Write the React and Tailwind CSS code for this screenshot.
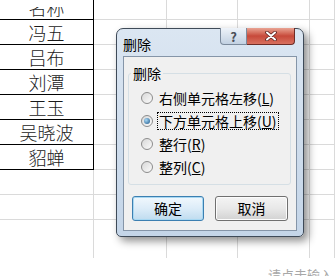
import React from 'react'

const NAMES = ['冯五', '吕布', '刘潭', '王玉', '吴晓波', '貂蝉']
const COLS = [94, 73, 71, 72, 25]

const OPTIONS = [
  { label: '右侧单元格左移', key: 'L' },
  { label: '下方单元格上移', key: 'U', checked: true },
  { label: '整行', key: 'R' },
  { label: '整列', key: 'C' },
]

function clsx(...a) {
  return a.filter(Boolean).join(' ')
}

function Row({ name, dark, height = 'h-[25px]', last, clipped }) {
  return (
    <div className={`flex ${height}`}>
      {COLS.map((w, i) => {
        const isName = i === 0
        const black = isName && dark
        return (
          <div
            key={i}
            style={{ width: w }}
            className={clsx(
              'flex shrink-0 border-r',
              clipped ? 'flex-col justify-end' : 'items-center justify-center',
              !last && 'border-b',
              black ? 'border-black' : 'border-[#dadada]',
            )}
          >
            {isName && name && !clipped && (
              <span className="text-[18px] font-light leading-none text-[#1a1a1a]">{name}</span>
            )}
            {isName && name && clipped && (
              <div className="flex h-[12px] w-full justify-center overflow-hidden">
                <span className="-mt-[9px] text-[18px] font-light leading-[18px] text-[#1a1a1a]">{name}</span>
              </div>
            )}
          </div>
        )
      })}
    </div>
  )
}

function Radio({ checked }) {
  return (
    <span className="flex h-[12px] w-[12px] shrink-0 items-center justify-center rounded-full border border-[#8c8c8c] bg-gradient-to-br from-[#d8d8d8] to-[#fbfbfb]">
      {checked && (
        <span className="h-[6px] w-[6px] rounded-full bg-[radial-gradient(circle_at_35%_35%,#a8d8f5,#1b5588)]" />
      )}
    </span>
  )
}

function Dialog() {
  return (
    <div className="absolute left-[116px] top-[28px] w-[188px] rounded-t-[7px] rounded-b-[5px] border border-[#3e4a58] bg-gradient-to-b from-[#dbe6f2] to-[#c4d5e8] px-[6px] pb-[5px] shadow-[4px_4px_9px_rgba(0,0,0,0.45)]">
      <div className="flex h-[27px] items-start justify-between">
        <span className="pt-[8px] text-[14px] leading-none text-black">删除</span>
        <div className="-mt-px mr-[2px] flex">
          <div className="flex h-[17px] w-[27px] items-center justify-center rounded-bl-[4px] border border-t-0 border-[#7b8a9c] bg-gradient-to-b from-[#eef3f9] to-[#c2d1e2] text-[13px] font-bold leading-none text-[#4a4f57]">
            ?
          </div>
          <div className="flex h-[17px] w-[48px] items-center justify-center rounded-br-[4px] border border-l-0 border-t-0 border-[#6e2c26] bg-gradient-to-b from-[#e8a393] via-[#c7493a] to-[#d8705f]">
            <svg width="12" height="10" viewBox="0 0 12 10">
              <path d="M2 1.5 L10 8.5 M10 1.5 L2 8.5" stroke="#5a2320" strokeWidth="3.6" strokeLinecap="round" />
              <path d="M2 1.5 L10 8.5 M10 1.5 L2 8.5" stroke="#ffffff" strokeWidth="2" strokeLinecap="round" />
            </svg>
          </div>
        </div>
      </div>
      <div className="border border-[#8595a8] bg-[#f0f0f0] px-[4px] pb-[9px] pt-[6px]">
        <fieldset className="mr-px rounded-[3px] border border-[#d5dfe5] pb-[6px] pl-[12px]">
          <legend className="-ml-[10px] px-[2px] text-[14px] leading-[20px] text-black">删除</legend>
          <div className="flex flex-col pt-[3px]">
            {OPTIONS.map((o) => (
              <div key={o.key} className="flex h-[23px] items-center gap-[4px]">
                <Radio checked={o.checked} />
                <span
                  className={clsx(
                    'px-px text-[14px] leading-[16px] text-black',
                    o.checked ? 'border border-dotted border-black' : 'border border-transparent',
                  )}
                >
                  {o.label}(<span className="underline">{o.key}</span>)
                </span>
              </div>
            ))}
          </div>
        </fieldset>
        <div className="mt-[11px] flex gap-[11px] pl-[4px]">
          <button className="flex h-[25px] w-[72px] items-center justify-center rounded-[3px] border border-[#3c7fb1] bg-gradient-to-b from-[#f1f8fd] via-[#dcecf8] to-[#bfdcef] text-[14px] text-black shadow-[inset_0_0_0_1px_#a8d8f2]">
            确定
          </button>
          <button className="flex h-[25px] w-[73px] items-center justify-center rounded-[3px] border border-[#707070] bg-gradient-to-b from-[#f4f4f4] via-[#e8e8e8] to-[#d2d2d2] text-[14px] text-black shadow-[inset_0_0_0_1px_#fcfcfc]">
            取消
          </button>
        </div>
      </div>
    </div>
  )
}

export default function App() {
  return (
    <div
      className="relative h-[276px] w-[335px] overflow-hidden bg-white"
      style={{ fontFamily: '"Noto Sans CJK SC", "Noto Sans", sans-serif' }}
    >
      <div className="flex flex-col">
        <Row name="名称" dark clipped height="h-[20px]" />
        {NAMES.map((n) => (
          <Row key={n} name={n} dark />
        ))}
        <Row />
        <Row />
        <Row height="h-[38px]" last />
        <div className="flex h-[18px] items-end justify-end overflow-hidden pr-[2px]">
          <span className="translate-y-[5px] text-[13px] leading-none text-[#a8a8a8]">请点击输入</span>
        </div>
      </div>
      <Dialog />
    </div>
  )
}
